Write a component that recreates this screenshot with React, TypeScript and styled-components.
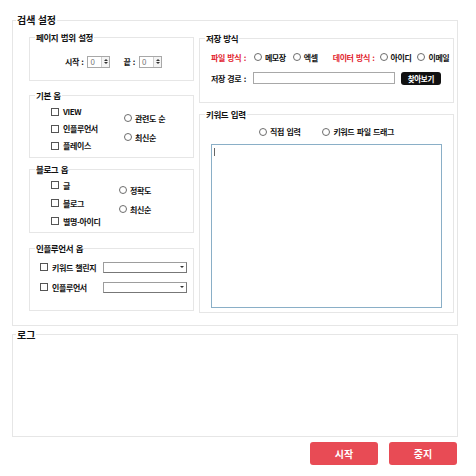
import React, { FC } from 'react';
import styled, { createGlobalStyle } from 'styled-components';

const GlobalStyle = createGlobalStyle`
    * {
        box-sizing: border-box;
    }
    body {
        margin: 0;
        background: #fff;
        color: #111;
        font-family: "Noto Sans CJK KR", "Noto Sans", sans-serif;
    }
`;

type CheckProps = { label: string };

const Check: FC<CheckProps> = ({ label }) => (
    <Option>
        <CheckBox />
        {label}
    </Option>
);

const Radio: FC<CheckProps & { $gap?: number }> = ({ label, $gap }) => (
    <Option $gap={$gap}>
        <RadioDot />
        {label}
    </Option>
);

const Spinner: FC = () => (
    <SpinBox>
        <SpinValue>0</SpinValue>
        <SpinArrows>
            <Arrow $up />
            <Arrow />
        </SpinArrows>
    </SpinBox>
);

const Combo: FC = () => (
    <Select>
        <SelectArrow>
            <Arrow />
        </SelectArrow>
    </Select>
);

const App: FC = () => {
    return (
        <Page>
            <GlobalStyle />
            <Group>
                <Title $big>검색 설정</Title>
                <Columns>
                    <Column>
                        <Group>
                            <Title>페이지 범위 설정</Title>
                            <RangeBody>
                                <Field>
                                    시작 :
                                    <Spinner />
                                </Field>
                                <Field>
                                    끝 :
                                    <Spinner />
                                </Field>
                            </RangeBody>
                        </Group>

                        <Group $mt={9}>
                            <Title>기본 옵</Title>
                            <OptionGrid $h={56} $split={73}>
                                <OptionList $pt={2} $row={17}>
                                    <Check label="VIEW" />
                                    <Check label="인플루언서" />
                                    <Check label="플레이스" />
                                </OptionList>
                                <OptionList $pt={7.5} $row={19}>
                                    <Radio label="관련도 순" />
                                    <Radio label="최신순" />
                                </OptionList>
                            </OptionGrid>
                        </Group>

                        <Group $mt={6}>
                            <Title>블로그 옵</Title>
                            <OptionGrid $h={57} $split={68}>
                                <OptionList $pt={1} $row={18}>
                                    <Check label="글" />
                                    <Check label="블로그" />
                                    <Check label="별명-아이디" />
                                </OptionList>
                                <OptionList $pt={5.5} $row={19}>
                                    <Radio label="정확도" />
                                    <Radio label="최신순" />
                                </OptionList>
                            </OptionGrid>
                        </Group>

                        <Group $mt={10}>
                            <Title>인플루언서 옵</Title>
                            <InfluencerBody>
                                <ComboRow>
                                    <Check label="키워드 챌린지" />
                                    <Combo />
                                </ComboRow>
                                <ComboRow>
                                    <Check label="인플루언서" />
                                    <Combo />
                                </ComboRow>
                            </InfluencerBody>
                        </Group>
                    </Column>

                    <Column>
                        <Group $mt={1}>
                            <Title>저장 방식</Title>
                            <SaveBody>
                                <SaveRow>
                                    <RedLabel $mr={8}>파일 방식 :</RedLabel>
                                    <Radio label="메모장" $gap={7} />
                                    <Radio label="엑셀" />
                                    <RedLabel $ml={15} $mr={5}>
                                        데이터 방식 :
                                    </RedLabel>
                                    <Radio label="아이디" $gap={6} />
                                    <Radio label="이메일" />
                                </SaveRow>
                                <SaveRow>
                                    <PathLabel>저장 경로 :</PathLabel>
                                    <PathInput />
                                    <BrowseButton>찾아보기</BrowseButton>
                                </SaveRow>
                            </SaveBody>
                        </Group>

                        <Group $mt={5.5}>
                            <Title>키워드 입력</Title>
                            <KeywordBody>
                                <ModeRow>
                                    <Radio label="직접 입력" />
                                    <Radio label="키워드 파일 드래그" />
                                </ModeRow>
                                <KeywordArea>
                                    <Caret />
                                </KeywordArea>
                            </KeywordBody>
                        </Group>
                    </Column>
                </Columns>
            </Group>

            <Group $mt={2}>
                <Title $big>로그</Title>
                <LogBody />
            </Group>

            <Actions>
                <ActionButton>시작</ActionButton>
                <ActionButton>중지</ActionButton>
            </Actions>
        </Page>
    );
};

const Page = styled.div`
    width: 458px;
    padding: 13px 0 0 12px;
`;

const Group = styled.fieldset<{ $mt?: number }>`
    margin: ${(p) => p.$mt ?? 0}px 0 0;
    padding: 0;
    min-width: 0;
    border: 1px solid #e6e6e6;
`;

const Title = styled.legend<{ $big?: boolean }>`
    margin-left: ${(p) => (p.$big ? 3 : 5)}px;
    padding: 0 1px;
    font-size: ${(p) => (p.$big ? 10 : 8.5)}px;
    line-height: ${(p) => (p.$big ? 14 : 11)}px;
    letter-spacing: ${(p) => (p.$big ? 0 : -0.4)}px;
    word-spacing: ${(p) => (p.$big ? 0 : 1)}px;
    font-weight: 700;
    color: #111;
`;

const Columns = styled.div`
    display: grid;
    grid-template-columns: 165px 255px;
    column-gap: 5px;
    padding: 5px 3px 12px 16px;
`;

const Column = styled.div`
    display: flex;
    flex-direction: column;
`;

const RangeBody = styled.div`
    height: 37px;
    display: flex;
    align-items: center;
    justify-content: center;
    gap: 13px;
    padding-left: 4px;
`;

const Field = styled.div`
    display: flex;
    align-items: center;
    gap: 4px;
    font-size: 8px;
    font-weight: 700;
    letter-spacing: -0.4px;
    word-spacing: 1px;
`;

const SpinBox = styled.div`
    display: flex;
    width: 23px;
    height: 12px;
    border: 1px solid #a8a8a8;
    background: #fff;
`;

const SpinValue = styled.span`
    flex: 1;
    padding-left: 2px;
    font-size: 8px;
    font-weight: 400;
    line-height: 10px;
    color: #777;
`;

const SpinArrows = styled.div`
    width: 8px;
    display: flex;
    flex-direction: column;
    align-items: center;
    justify-content: center;
    gap: 1px;
    border-left: 1px solid #cfcfcf;
    background: #f4f4f4;
`;

const Arrow = styled.span<{ $up?: boolean }>`
    width: 0;
    height: 0;
    border-left: 2px solid transparent;
    border-right: 2px solid transparent;
    ${(p) => (p.$up ? 'border-bottom: 2px solid #333;' : 'border-top: 2px solid #333;')}
`;

const OptionGrid = styled.div<{ $h: number; $split: number }>`
    height: ${(p) => p.$h}px;
    display: grid;
    grid-template-columns: ${(p) => p.$split}px 1fr;
    padding-left: 21px;
`;

const OptionList = styled.div<{ $pt: number; $row: number }>`
    display: flex;
    flex-direction: column;
    padding-top: ${(p) => p.$pt}px;
    & > * {
        height: ${(p) => p.$row}px;
    }
`;

const Option = styled.label<{ $gap?: number }>`
    display: flex;
    align-items: center;
    gap: 3px;
    margin-right: ${(p) => p.$gap ?? 0}px;
    font-size: 8px;
    font-weight: 700;
    letter-spacing: -0.4px;
    word-spacing: 1px;
    white-space: nowrap;
`;

const CheckBox = styled.span`
    width: 8px;
    height: 8px;
    margin-right: 1px;
    border: 1px solid #555;
    background: #fff;
    flex-shrink: 0;
`;

const RadioDot = styled.span`
    width: 8px;
    height: 8px;
    border: 1px solid #6d6d6d;
    border-radius: 50%;
    background: #fff;
    flex-shrink: 0;
`;

const InfluencerBody = styled.div`
    height: 56px;
    padding: 3px 0 0 10px;
    display: flex;
    flex-direction: column;
`;

const ComboRow = styled.div`
    height: 20px;
    display: grid;
    grid-template-columns: 63px 84px;
    align-items: center;
`;

const Select = styled.div`
    height: 11px;
    display: flex;
    justify-content: flex-end;
    border: 1px solid #9d9d9d;
    border-right-color: #777;
    border-bottom-color: #777;
    background: #fff;
`;

const SelectArrow = styled.span`
    width: 8px;
    display: flex;
    align-items: center;
    justify-content: center;
`;

const SaveBody = styled.div`
    height: 58px;
    padding: 6px 0 0 11px;
    display: flex;
    flex-direction: column;
    gap: 7px;
`;

const SaveRow = styled.div`
    height: 14px;
    display: flex;
    align-items: center;
`;

const RedLabel = styled.span<{ $ml?: number; $mr: number }>`
    margin: 0 ${(p) => p.$mr}px 0 ${(p) => p.$ml ?? 0}px;
    font-size: 8px;
    font-weight: 700;
    letter-spacing: -0.4px;
    word-spacing: 1px;
    color: #e2232e;
    white-space: nowrap;
`;

const PathLabel = styled.span`
    margin-right: 7px;
    font-size: 8px;
    font-weight: 700;
    letter-spacing: -0.4px;
    word-spacing: 1px;
    white-space: nowrap;
`;

const PathInput = styled.div`
    width: 142px;
    height: 12px;
    border: 1px solid #a8a8a8;
    background: #fff;
`;

const BrowseButton = styled.button`
    margin-left: 6px;
    width: 40px;
    height: 13px;
    padding: 0;
    border: none;
    border-radius: 3px;
    background: #111;
    color: #fff;
    font-family: inherit;
    font-size: 7.5px;
    font-weight: 700;
    letter-spacing: -0.3px;
    line-height: 13px;
`;

const KeywordBody = styled.div`
    height: 192px;
    padding: 0 11px;
`;

const ModeRow = styled.div`
    height: 24px;
    display: flex;
    align-items: center;
    justify-content: center;
    gap: 22px;
`;

const KeywordArea = styled.div`
    height: 164px;
    border: 1px solid #8aafc7;
    background: #fff;
    padding: 3px 0 0 2px;
`;

const Caret = styled.span`
    display: block;
    width: 1px;
    height: 8px;
    background: #666;
`;

const LogBody = styled.div`
    height: 94px;
`;

const Actions = styled.div`
    display: flex;
    justify-content: flex-end;
    gap: 11px;
    margin-top: 5px;
    padding-right: 1px;
`;

const ActionButton = styled.button`
    width: 68px;
    height: 23px;
    padding: 0;
    border: none;
    border-radius: 3px;
    background: #e84b55;
    color: #fff;
    font-family: inherit;
    font-size: 10px;
    font-weight: 700;
`;

export default App;
